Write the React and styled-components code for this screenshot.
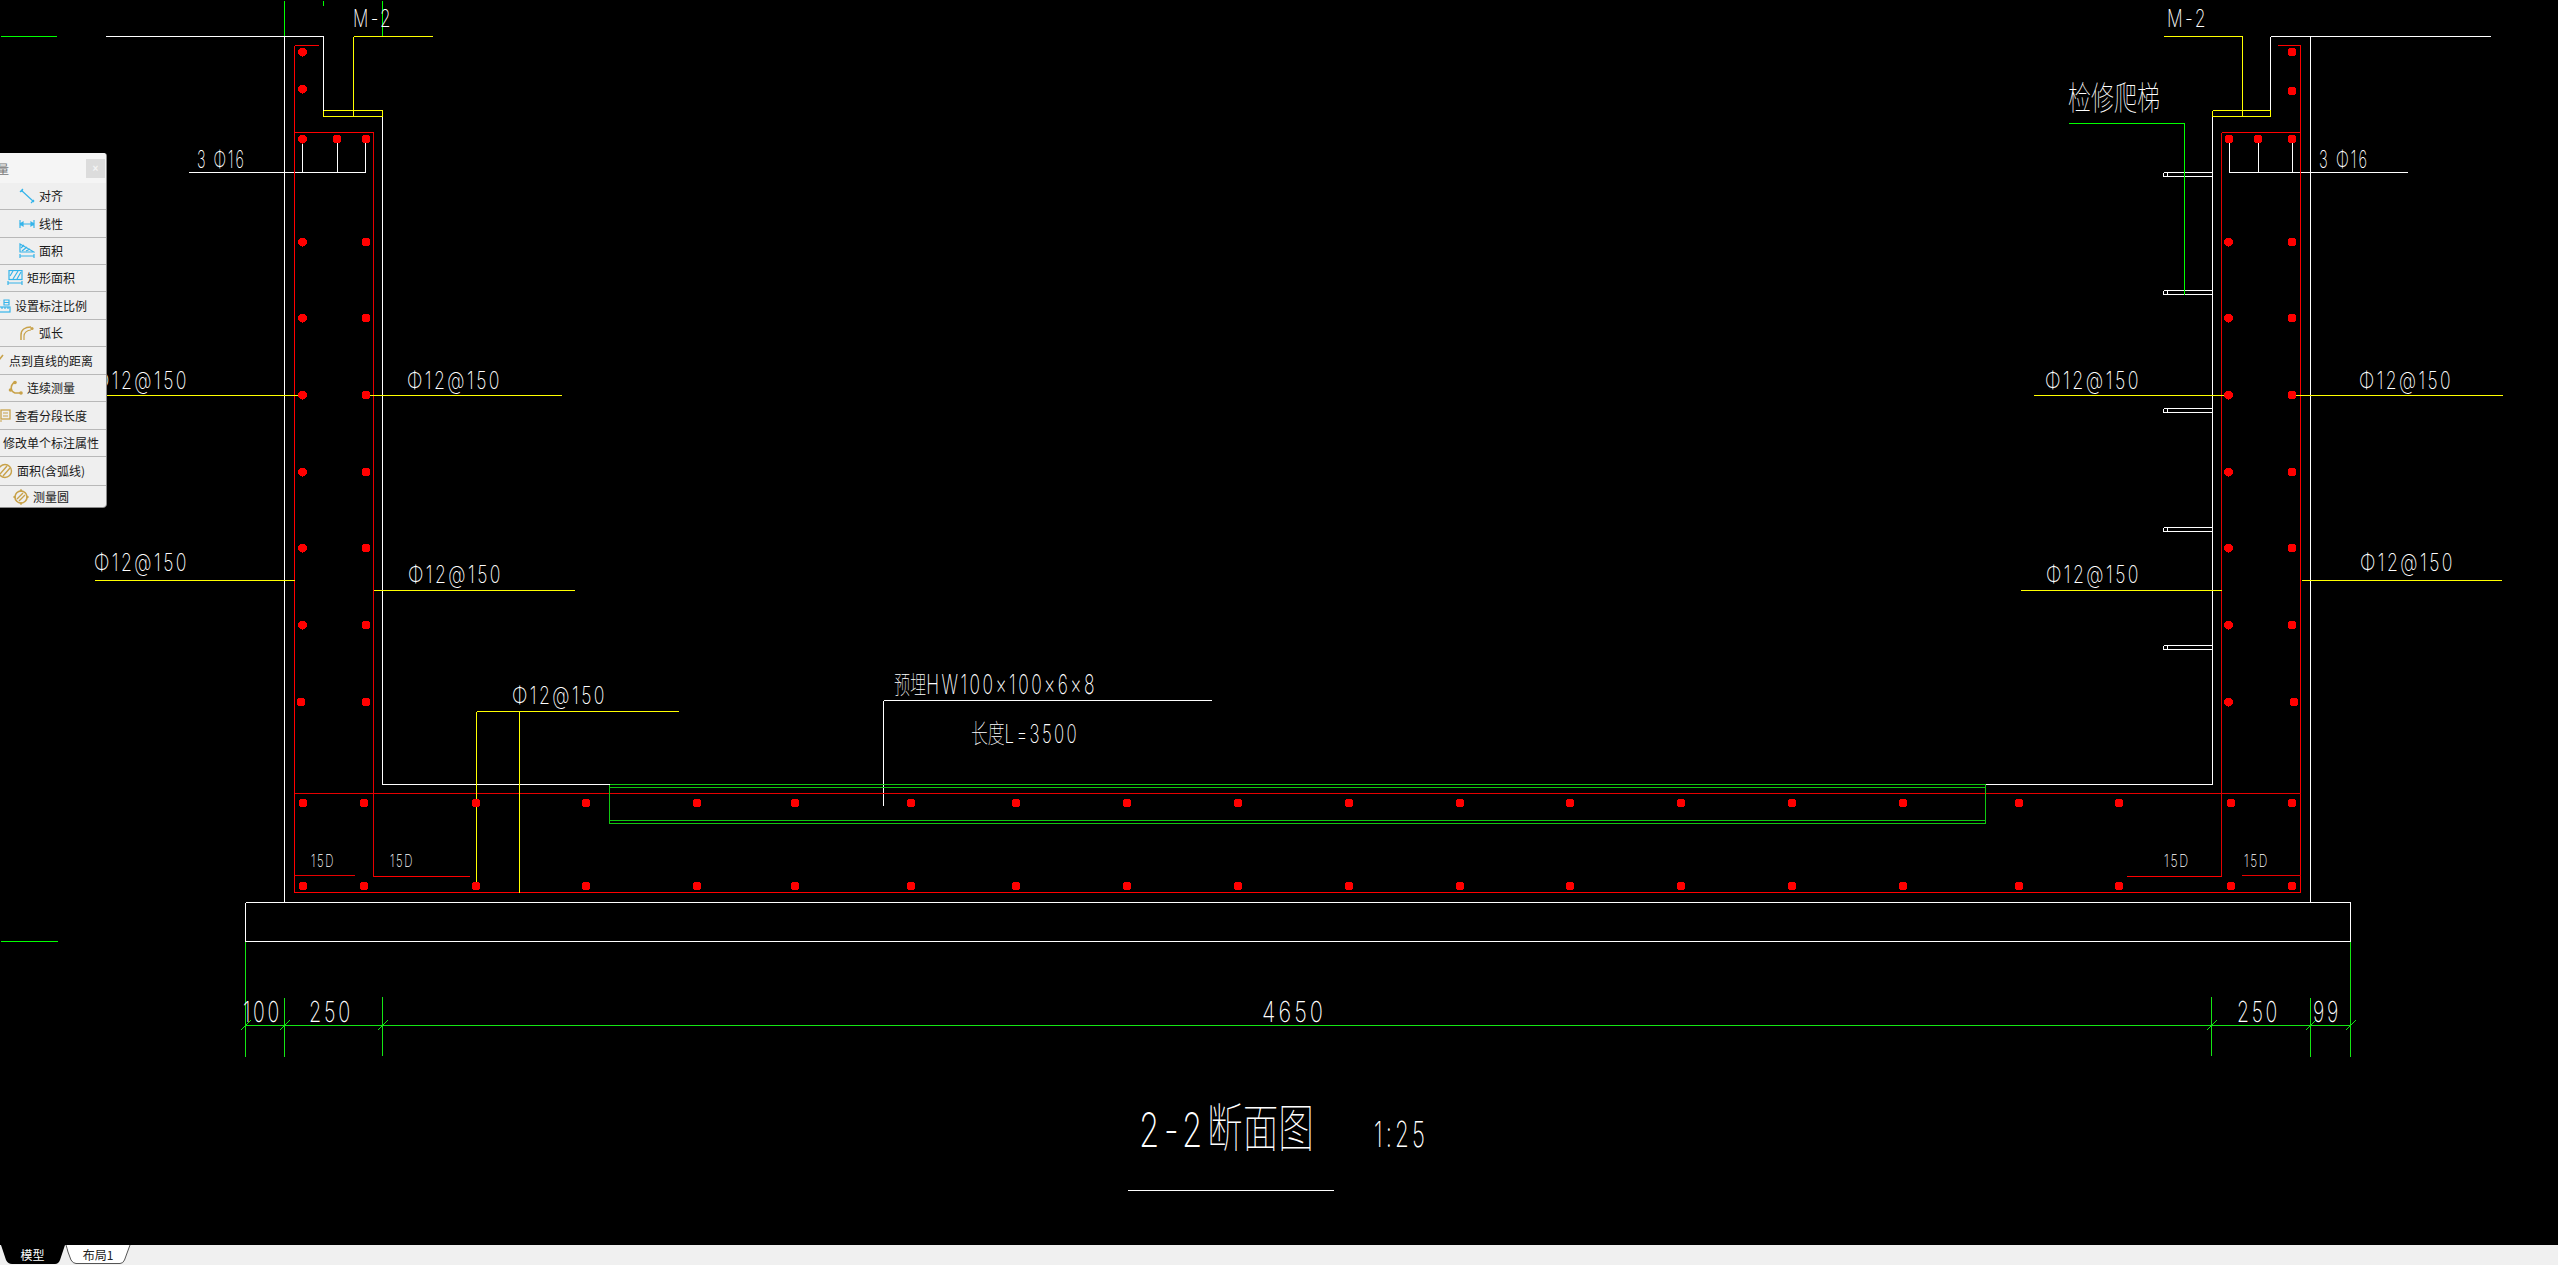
import React from 'react';
import styled, { createGlobalStyle } from 'styled-components';

const Global = createGlobalStyle`
  html, body { margin: 0; padding: 0; height: 100%; background: #000; overflow: hidden; }
  #root { height: 100%; }
`;

const Screen = styled.div`
  display: flex;
  flex-direction: column;
  width: 100%;
  height: 100vh;
  background: #000;
  overflow: hidden;
`;

const Viewport = styled.main`
  position: relative;
  flex: 1;
  min-height: 0;
  overflow: hidden;
`;

const Drawing = styled.svg`
  display: block;
  width: 2558px;
  height: 1245px;
`;

const Strokes = styled.g`
  shape-rendering: crispEdges;
  fill: none;
  stroke-width: 1;
`;

const Rebar = styled.circle`
  fill: #ff0000;
  shape-rendering: crispEdges;
`;

const CadLabel = styled.text`
  font-family: "Inter", "Roboto", "Noto Sans CJK SC", sans-serif;
  font-weight: 200;
  letter-spacing: 0.14em;
  fill: #ffffff;
  white-space: pre;
`;

const CadHan = styled(CadLabel)`
  font-family: "Noto Sans CJK SC", sans-serif;
  font-weight: 100;
  letter-spacing: 0;
`;

const HanSpan = styled.tspan`
  font-family: "Noto Sans CJK SC", sans-serif;
  font-weight: 100;
  letter-spacing: 0;
`;

/* ---- floating measure palette ---- */
const Palette = styled.aside`
  position: absolute;
  left: -24px;
  top: 153px;
  width: 130px;
  background: #efefef;
  border-radius: 3px;
  box-shadow: 1px 0 0 #8a8a8a, 0 1px 0 #8a8a8a;
  font-family: "Noto Sans CJK SC", "Noto Sans", sans-serif;
  font-size: 12px;
  color: #1a1a1a;
  overflow: hidden;
`;

const PaletteHead = styled.header`
  display: flex;
  align-items: center;
  justify-content: space-between;
  height: 30px;
  padding: 0 1px 0 9px;
  box-sizing: border-box;
  background: #f5f5f5;
  color: #777;
`;

const CloseBox = styled.span`
  display: flex;
  align-items: center;
  justify-content: center;
  width: 19px;
  height: 19px;
  background: #dcdcdc;
  color: #f4f4f4;
  font: bold 10px "Liberation Sans", sans-serif;
`;

const Tool = styled.div`
  display: flex;
  align-items: center;
  justify-content: center;
  gap: 4px;
  height: ${p => p.$h}px;
  box-sizing: border-box;
  border-top: ${p => (p.$first ? 'none' : '1px solid #b8b8b8')};
  white-space: nowrap;
  line-height: 1;
`;

const ToolIcon = styled.svg`
  flex: none;
  width: 16px;
  height: 16px;
  fill: none;
  stroke-width: 1.2;
`;

/* ---- layout tabs ---- */
const TabBar = styled.footer`
  display: flex;
  flex: none;
  height: 20px;
  background: #f0f0f0;
  font-family: "Noto Sans CJK SC", "Noto Sans", sans-serif;
  font-size: 12px;
`;

const Tab = styled.div`
  position: relative;
  display: flex;
  align-items: center;
  justify-content: center;
  width: ${p => p.$w}px;
  height: 19px;
  color: ${p => (p.$active ? '#fff' : '#222')};
  span { position: relative; }
  svg { position: absolute; inset: 0; width: 100%; height: 100%; }
`;

/* ---- drawing data ---- */
const WHITE = '#ffffff', YEL = '#ffff00', RED = '#ff0000', DRED = '#e60000', GRN = '#00ff00', DIM = '#14e614', BOX = '#10c810';

const segs = [
  [GRN, 0, 36, 56, 36], [GRN, 0, 941, 57, 941],
  [GRN, 284, 0, 284, 36], [GRN, 323, 0, 323, 5], [GRN, 382, 0, 382, 36],
  [WHITE, 105, 36, 323, 36], [WHITE, 284, 36, 284, 902], [WHITE, 323, 36, 323, 116],
  [WHITE, 382, 116, 382, 784], [WHITE, 382, 784, 609, 784],
  [WHITE, 2270, 36, 2490, 36], [WHITE, 2310, 36, 2310, 902], [WHITE, 2270, 36, 2270, 116],
  [WHITE, 2212, 116, 2212, 784], [WHITE, 1985, 784, 2212, 784],
  [WHITE, 245, 902, 2350, 902], [WHITE, 245, 941, 2350, 941], [WHITE, 245, 902, 245, 941], [WHITE, 2350, 902, 2350, 941],
  [WHITE, 188, 172, 365, 172], [WHITE, 302, 136, 302, 172], [WHITE, 337, 136, 337, 172], [WHITE, 365, 136, 365, 172],
  [WHITE, 2229, 172, 2407, 172], [WHITE, 2229, 136, 2229, 172], [WHITE, 2258, 136, 2258, 172], [WHITE, 2292, 136, 2292, 172],
  [WHITE, 883, 700, 1211, 700], [WHITE, 883, 700, 883, 805],
  [WHITE, 1127, 1190, 1333, 1190],
  ...[172, 290, 408, 527, 645].flatMap(y => [
    [WHITE, 2163, y, 2212, y], [WHITE, 2163, y + 4, 2212, y + 4], [WHITE, 2163, y, 2163, y + 4], [WHITE, 2167, y, 2167, y + 4],
  ]),
  [RED, 294, 45, 294, 892], [RED, 294, 45, 318, 45], [RED, 294, 132, 373, 132], [DRED, 373, 132, 373, 876], [RED, 373, 876, 469, 876],
  [RED, 2300, 45, 2300, 892], [RED, 2277, 45, 2300, 45], [RED, 2221, 132, 2300, 132], [DRED, 2221, 132, 2221, 876], [RED, 2126, 876, 2221, 876],
  [DRED, 294, 793, 2300, 793], [RED, 294, 892, 2300, 892], [DRED, 294, 875, 354, 875], [DRED, 2241, 875, 2300, 875],
  [YEL, 353, 36, 432, 36], [YEL, 353, 36, 353, 116],
  [YEL, 323, 110, 382, 110], [YEL, 323, 116, 382, 116], [YEL, 323, 110, 323, 116], [YEL, 382, 110, 382, 116],
  [YEL, 2163, 36, 2242, 36], [YEL, 2242, 36, 2242, 116],
  [YEL, 2212, 110, 2270, 110], [YEL, 2212, 116, 2270, 116], [YEL, 2212, 110, 2212, 116], [YEL, 2270, 110, 2270, 116],
  [YEL, 60, 395, 303, 395], [YEL, 366, 395, 561, 395], [YEL, 94, 580, 294, 580], [YEL, 373, 590, 574, 590],
  [YEL, 476, 711, 678, 711], [YEL, 476, 711, 476, 887], [YEL, 519, 711, 519, 892],
  [YEL, 2033, 395, 2228, 395], [YEL, 2292, 395, 2502, 395], [YEL, 2020, 590, 2221, 590], [YEL, 2301, 580, 2501, 580],
  [BOX, 609, 784, 1985, 784], [BOX, 609, 787, 1985, 787], [BOX, 609, 820, 1985, 820], [BOX, 609, 823, 1985, 823],
  [BOX, 609, 784, 609, 823], [BOX, 1985, 784, 1985, 823],
  [GRN, 2068, 123, 2184, 123], [GRN, 2184, 123, 2184, 294],
  [DIM, 245, 1025, 2350, 1025], [DIM, 245, 941, 245, 1056], [DIM, 284, 997, 284, 1056], [DIM, 382, 996, 382, 1055],
  [DIM, 2211, 996, 2211, 1055], [DIM, 2310, 997, 2310, 1056], [DIM, 2350, 941, 2350, 1056],
];

const ticks = [245, 284, 382, 2211, 2310, 2350];

const bottomXs = [303, 364, 476, 586, 697, 795, 911, 1016, 1127, 1238, 1349, 1460, 1570, 1681, 1792, 1903, 2019, 2119, 2231, 2292];
const wallYs = [242, 318, 395, 472, 548, 625, 702];
const rebars = [
  ...bottomXs.flatMap(x => [[x, 803], [x, 886]]),
  ...wallYs.flatMap((y, i) => [[i === 6 ? 301 : 302.5, y], [366, y], [2228.5, y], [i === 6 ? 2294 : 2292, y]]),
  [302.5, 52], [302.5, 89], [2292, 52], [2292, 91],
  [302.5, 139], [337, 139], [366, 139], [2229, 139], [2258, 139], [2292, 139],
];

// [text, left, top, width, height]
const labels = [
  ['M-2', 353, 9, 40, 18], ['M-2', 2167, 9, 41, 18],
  ['3 Φ16', 197, 150, 49, 18], ['3 Φ16', 2319, 150, 50, 18],
  ['Φ12@150', 94, 371, 95, 18], ['Φ12@150', 407, 371, 95, 18],
  ['Φ12@150', 94, 553, 95, 18], ['Φ12@150', 408, 565, 95, 18],
  ['Φ12@150', 512, 686, 95, 18],
  ['Φ12@150', 2045, 371, 96, 18], ['Φ12@150', 2359, 371, 94, 18],
  ['Φ12@150', 2046, 565, 95, 18], ['Φ12@150', 2360, 553, 95, 18],
  ['15D', 311, 854, 24, 13], ['15D', 390, 854, 24, 13], ['15D', 2164, 854, 26, 13], ['15D', 2244, 854, 25, 13],
  ['100', 243, 1001, 39, 21], ['250', 309, 1001, 44, 21], ['4650', 1262, 1001, 64, 21], ['250', 2237, 1001, 43, 21], ['99', 2313, 1001, 28, 21],
  ['1:25', 1374, 1121, 54, 26],
];

// mixed Chinese and Latin: [han, latin, left, baseline, width, latin size, han size]
const mixedLabels = [
  ['预埋', 'HW100×100×6×8', 894, 694, 203, 27, 25],
  ['长度', 'L=3500', 971, 743, 108, 26, 26],
];

const blue = '#35b4ea', gold = '#c8a24a';

const icons = {
  align: <><path d="M2 2l13 12M1 4l3-3M12 15l3-3" stroke={blue} /><circle cx="3" cy="3" r="1" fill={blue} /><circle cx="14" cy="13" r="1" fill={blue} /></>,
  linear: <path d="M1 4v8M15 4v8M1 8h14M1 8l3-2v4zM15 8l-3-2v4z" stroke={blue} fill={blue} />,
  area: <><path d="M1 1l14 8H1z" stroke={blue} /><path d="M2 5l3-3M3 8l5-4M7 8l4-2" stroke={blue} /><path d="M1 11v4M15 11v4M1 13h14" stroke={blue} /></>,
  rect: <><rect x="2" y="0.5" width="13" height="9" stroke={blue} /><path d="M3 6l3-5M6 9l5-8M10 9l4-7" stroke={blue} /><path d="M1 11v4M15 11v4M1 13h14" stroke={blue} /></>,
  scale: <><rect x="1" y="9" width="14" height="5" stroke={blue} /><path d="M4 9v2M7 9v2M10 9v2M13 9v2" stroke={blue} /><path d="M9 2h5v5H9zM9 4.500h5M2 4l3-2" stroke={blue} /></>,
  arc: <><path d="M2 15V10C2 5 6 2 12 2" stroke={gold} strokeWidth="1.5" /><path d="M5 15v-4c0-3 3-6 7-6" stroke={gold} /><circle cx="13" cy="3.500" r="1.600" fill={gold} /></>,
  point: <path d="M2 9l3 4 9-11" stroke={gold} strokeWidth="1.6" />,
  chain: <><path d="M8 2C3 5 3 11 8 13h6" stroke={gold} strokeWidth="1.6" /><circle cx="8" cy="2.500" r="1.800" fill={gold} /><circle cx="3.500" cy="10" r="1.800" fill={gold} /><circle cx="14" cy="13" r="1.800" fill={gold} /></>,
  segment: <><rect x="6" y="2" width="9" height="9" stroke={gold} strokeWidth="1.3" /><path d="M8 5h5M8 8h5M1 13h6" stroke={gold} /><circle cx="2" cy="13" r="1.600" fill={gold} /><circle cx="2" cy="4" r="1.600" fill={gold} /></>,
  edit: <path d="M3 13l9-9 2 2-9 9H3z" stroke={gold} />,
  arcArea: <><circle cx="8" cy="8" r="6.500" stroke={gold} strokeWidth="1.4" /><path d="M3 11l7-8M6 13l7-8" stroke={gold} strokeWidth="1.4" /></>,
  circle: <><circle cx="8" cy="8" r="6" stroke={gold} strokeWidth="1.6" /><path d="M4 10l6-6M6 12l6-6" stroke={gold} strokeWidth="1.4" /><circle cx="8" cy="1.500" r="1.200" fill={gold} /><circle cx="1.500" cy="8" r="1.200" fill={gold} /><circle cx="14.500" cy="8" r="1.200" fill={gold} /><circle cx="8" cy="14.500" r="1.200" fill={gold} /></>,
};

const tools = [
  ['对齐', 'align', 26], ['线性', 'linear', 28], ['面积', 'area', 27], ['矩形面积', 'rect', 27],
  ['设置标注比例', 'scale', 28], ['弧长', 'arc', 27], ['点到直线的距离', 'point', 28], ['连续测量', 'chain', 27],
  ['查看分段长度', 'segment', 28], ['修改单个标注属性', 'edit', 27], ['面积(含弧线)', 'arcArea', 29], ['测量圆', 'circle', 22],
];

const CAP = 0.727;

export default function App() {
  return (
    <Screen>
      <Global />
      <Viewport>
        <Drawing viewBox="0 0 2558 1245">
          <Strokes transform="translate(.5 .5)">
            {segs.map(([c, x1, y1, x2, y2], i) => <line key={i} x1={x1} y1={y1} x2={x2} y2={y2} stroke={c} />)}
            {ticks.map(x => <line key={x} x1={x - 5} y1={1030} x2={x + 5} y2={1020} stroke={DIM} />)}
          </Strokes>
          {rebars.map(([x, y], i) => <Rebar key={i} cx={x} cy={y} r={4.5} />)}
          {labels.map(([t, x, y, w, h], i) => (
            <CadLabel key={i} x={x} y={y + h} fontSize={h / CAP} textLength={w} lengthAdjust="spacingAndGlyphs">{t}</CadLabel>
          ))}
          {mixedLabels.map(([han, latin, x, y, w, size, hanSize]) => (
            <CadLabel key={latin} x={x} y={y} fontSize={size} textLength={w} lengthAdjust="spacingAndGlyphs">
              <HanSpan fontSize={hanSize}>{han}</HanSpan>{latin}
            </CadLabel>
          ))}
          <CadLabel x={1139} y={1147} fontSize={48} textLength={175} lengthAdjust="spacingAndGlyphs">
            2-2<HanSpan fontSize={52}>断面图</HanSpan>
          </CadLabel>
          <CadHan x={2068} y={110} fontSize={33} textLength={92} lengthAdjust="spacingAndGlyphs">检修爬梯</CadHan>
        </Drawing>
        <Palette>
          <PaletteHead>
            <span>测量</span>
            <CloseBox>×</CloseBox>
          </PaletteHead>
          {tools.map(([label, icon, h], i) => (
            <Tool key={label} $h={h} $first={i === 0}>
              <ToolIcon viewBox="0 0 16 16">{icons[icon]}</ToolIcon>
              <span>{label}</span>
            </Tool>
          ))}
        </Palette>
      </Viewport>
      <TabBar>
        <Tab $w={65} $active>
          <svg viewBox="0 0 65 19"><path d="M1 0h64l-5 15q-1.500 4-5 4H12q-4 0-6-4z" fill="#000" /></svg>
          <span>模型</span>
        </Tab>
        <Tab $w={66}>
          <svg viewBox="0 0 66 19"><path d="M1 0q1 3 2 7l3 8q2 3.500 5 3.500h44q3 0 4.500-3.500L65 0" fill="#fff" stroke="#555" /></svg>
          <span>布局1</span>
        </Tab>
      </TabBar>
    </Screen>
  );
}
